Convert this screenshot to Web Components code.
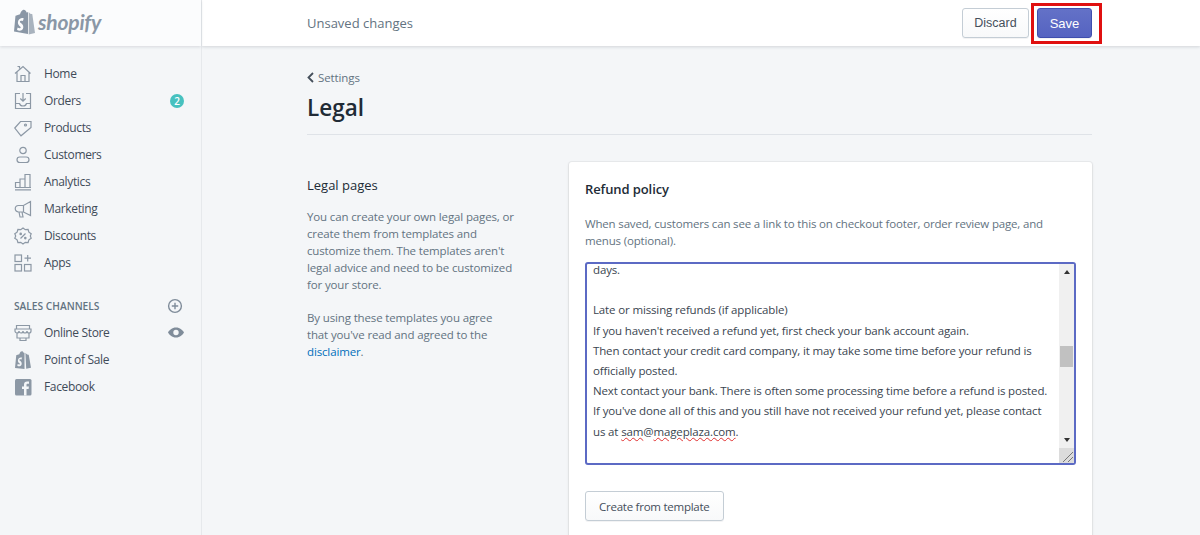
<!DOCTYPE html>
<html lang="en">
<head>
<meta charset="utf-8">
<title>Legal</title>
<style>
  html, body { margin: 0; height: 535px; overflow: hidden; background: #f4f6f8; }
  body { font-family: "Open Sans", "Noto Sans", sans-serif; color: #212b36; }
  shop-app { height: 535px; }
</style>
</head>
<body>
<template id="tpl-app">
  <style>
    :host { display: grid; grid-template-columns: 202px minmax(0, 1fr); grid-template-rows: 46px 1fr; overflow: hidden; }
    ::slotted(top-bar) { grid-column: 2; grid-row: 1; }
    ::slotted(shop-sidebar) { grid-column: 1; grid-row: 1 / 3; }
    ::slotted(main) { grid-column: 2; grid-row: 2; }
  </style>
  <slot></slot>
</template>

<template id="tpl-sidebar">
  <style>
    :host { display: block; border-right: 1px solid #e6e9ec; background: #f4f6f8; z-index: 2; }
    header { height: 46px; box-sizing: border-box; padding: 9px 0 0 14px; background: #fbfcfd; box-shadow: 0 1px 3px rgba(33,43,54,.14); display: flex; gap: 3px; align-items: flex-start; }
    header svg { width: 21px; height: 26px; flex: none; }
    .word { font: italic 700 21px/25px "Lato", "Open Sans", sans-serif; color: #8a97a6; letter-spacing: -.2px; }
    nav { padding-top: 14px; }
    h2 { margin: 16px 0 0; padding: 0 18px 0 14px; height: 27px; display: flex; align-items: center; justify-content: space-between; font-size: 10.2px; font-weight: 600; color: #637381; text-transform: uppercase; }
    h2 svg { width: 16px; height: 16px; }
  </style>
  <header>
    <svg viewBox="0 0 21 26"><path fill="#8a97a6" d="M13.6 3.2 12.6 3.5C12 1.7 11 .7 9.8 .7 8.8 .7 7.2 1.6 6 5.3L2.3 6.5C1.6 6.7 1.5 6.8 1.4 7.5L0 22.5 14 25V3.2Z"/><path fill="#a9b3be" d="M14.7 3 14.7 25.4 21 24 18.3 5.2C18.2 5 18 4.9 17.9 4.9L16.2 4.7Z"/><path fill="#fbfcfd" d="M9.7 9.4 8.9 12C8.2 11.7 7.5 11.6 6.9 11.7 5.7 11.8 5.6 13 6.5 13.7 7.8 14.7 9.6 15.800 9.300 18.500 9 20.900 7 21.900 5.100 21.700 3.900 21.600 3 21 3 21L3.600 18.500C4.300 19 5.300 19.400 6 19.300 6.800 19.200 6.900 18.400 6.400 17.800 5.300 16.600 3.700 15.700 3.900 13.200 4.100 10.800 6 9.300 7.900 9.100 8.800 9 9.300 9.200 9.700 9.400Z"/></svg>
    <span class="word">shopify</span>
  </header>
  <nav><slot></slot></nav>
  <h2><span>Sales channels</span>
    <svg viewBox="0 0 16 16" fill="none" stroke="#7f8c9a" stroke-width="1.4"><circle cx="8" cy="8" r="6.4"/><path d="M8 4.800v6.400M4.800 8h6.400"/></svg>
  </h2>
  <slot name="channels"></slot>
</template>

<template id="tpl-nav-item">
  <style>
    :host { display: flex; align-items: center; height: 27px; padding: 0 17px 0 14px; font-size: 12px; font-weight: 500; letter-spacing: -.35px; color: #3f4b58; }
    .icon { width: 18px; height: 18px; margin-right: 12px; flex: none; display: flex; }
    .label { flex: 1; }
    ::slotted(svg) { width: 18px; height: 18px; fill: none; stroke: #8c98a5; stroke-width: 1.2; }
  </style>
  <span class="icon"><slot name="icon"></slot></span>
  <span class="label"><slot></slot></span>
  <slot name="end"></slot>
</template>

<template id="tpl-badge">
  <style>
    :host { display: flex; width: 14px; height: 14px; border-radius: 50%; background: #47c1bf; color: #fff; font-size: 10px; font-weight: 600; letter-spacing: 0; align-items: center; justify-content: center; line-height: 1; }
  </style>
  <slot></slot>
</template>

<template id="tpl-topbar">
  <style>
    :host { display: flex; align-items: center; justify-content: space-between; height: 46px; box-sizing: border-box; padding: 0 98px 0 105px; background: #fff; box-shadow: 0 1px 3px rgba(33,43,54,.16); z-index: 1; }
    .title { font-size: 13px; font-weight: 500; color: #637381; }
    .actions { display: flex; align-items: center; gap: 2px; margin-top: 1px; }
    .mark { border: 3px solid #e01010; padding: 2px 7px 3px 3px; display: flex; }
    ::slotted([slot=discard]) { margin-top: -1px; }
  </style>
  <span class="title"><slot></slot></span>
  <div class="actions">
    <slot name="discard"></slot>
    <div class="mark"><slot name="save"></slot></div>
  </div>
</template>

<template id="tpl-button">
  <style>
    :host { display: inline-flex; }
    button { font: 400 11.5px "Open Sans", sans-serif; letter-spacing: -.25px; height: 30px; padding: 0 13px; color: #454f5b; background: linear-gradient(#fff, #f8f9fa); border: 1px solid #c4cdd5; border-radius: 3px; box-shadow: 0 1px 0 rgba(22,29,37,.05); }
    :host([primary]) button { font: 400 13px "Liberation Sans", sans-serif; letter-spacing: 0; color: #fff; width: 55px; padding: 0; background: linear-gradient(#6371c7, #5563c1); border-color: #3f4eae; }
    :host([sans]) button { font: 400 12.5px "Liberation Sans", sans-serif; letter-spacing: 0; width: 67px; padding: 0; }
  </style>
  <button type="button"><slot></slot></button>
</template>

<template id="tpl-page-head">
  <style>
    :host { display: block; height: 89px; box-sizing: border-box; padding-top: 22px; border-bottom: 1px solid #dfe3e8; }
    .back { display: flex; align-items: center; gap: 4px; height: 18px; font-size: 11.5px; letter-spacing: -.1px; color: #637381; }
    svg { width: 7px; height: 11px; fill: none; stroke: #454f5b; stroke-width: 1.8; }
    h1 { margin: 6px 0 0; font-size: 22.5px; line-height: 32px; font-weight: 600; color: #212b36; }
  </style>
  <div class="back"><svg viewBox="0 0 7 11"><path d="M6 1 1.500 5.500 6 10"/></svg><span><slot name="back"></slot></span></div>
  <h1><slot></slot></h1>
</template>

<template id="tpl-section">
  <style>
    :host { display: grid; grid-template-columns: 262px minmax(0, 1fr); margin-top: 27px; }
    aside { padding-top: 14px; font-size: 11.5px; letter-spacing: -.14px; line-height: 17px; color: #637381; }
    h2 { margin: 0 0 14px; font-size: 13px; letter-spacing: 0; line-height: 18px; font-weight: 500; color: #212b36; }
    ::slotted(p) { margin: 0 0 16px; width: 209px; }
  </style>
  <aside><h2><slot name="title"></slot></h2><slot name="text"></slot></aside>
  <slot></slot>
</template>

<template id="tpl-card">
  <style>
    :host { display: block; background: #fff; border-radius: 3px; padding: 17px 16px 16px; box-shadow: 0 0 0 1px rgba(63,63,68,.05), 0 1px 3px rgba(63,63,68,.15); height: 500px; }
    h3 { margin: 0; font-size: 13px; letter-spacing: -.1px; line-height: 20px; font-weight: 600; color: #212b36; }
    .help { margin: 16px 0 13px; font-size: 11.5px; letter-spacing: -.17px; line-height: 17px; color: #637381; }
    .foot { margin-top: 26px; }
  </style>
  <h3><slot name="title"></slot></h3>
  <div class="help"><slot name="help"></slot></div>
  <slot></slot>
  <div class="foot"><slot name="foot"></slot></div>
</template>

<template id="tpl-editor">
  <style>
    :host { display: flex; height: 203px; box-sizing: border-box; border: 2px solid #5c6ac4; border-radius: 3px; background: #fff; overflow: hidden; }
    .text { flex: 1; min-width: 0; margin-top: -4px; padding: 0 6px; font-size: 11.5px; letter-spacing: -.14px; line-height: 20.2px; color: #3a4550; }
    ::slotted(div) { min-height: 20.2px; white-space: nowrap; }
    .bar { width: 15px; flex: none; background: #f0f0f0; display: flex; flex-direction: column; align-items: center; }
    .arrow { height: 15px; flex: none; display: flex; align-items: center; justify-content: center; }
    .up { border: 3.500px solid transparent; border-top: 0; border-bottom: 4px solid #333; }
    .down { border: 3.500px solid transparent; border-bottom: 0; border-top: 4px solid #333; }
    .track { flex: 1; width: 100%; padding-top: 67px; box-sizing: border-box; }
    .thumb { height: 21px; margin: 0 1px; background: #c1c1c1; }
    .grip { height: 15px; flex: none; width: 100%; background: #dcdcdc; }
    .grip svg { display: block; width: 15px; height: 15px; }
  </style>
  <div class="text"><slot></slot></div>
  <div class="bar">
    <div class="arrow"><i class="up"></i></div>
    <div class="track"><div class="thumb"></div></div>
    <div class="arrow" style="height:16px"><i class="down"></i></div>
    <div class="grip"><svg viewBox="0 0 15 15" fill="none" stroke="#777"><path d="M4 14 14 4M9 14 14 9"/></svg></div>
  </div>
</template>

<shop-app>
  <shop-sidebar>
    <nav-item><svg slot="icon" viewBox="0 0 18 18"><path d="M1 8.500 9 1.500l7.500 7M3 7v9.500h12V7M3.500 1.500h2v2M7 16.500v-6h4v6"/></svg>Home</nav-item>
    <nav-item><svg slot="icon" viewBox="0 0 18 18"><path d="M6 1.500H1.500v15h15v-15H12M9 1v8M6.300 6.500 9 9.200l2.700-2.700M1.500 11.500h4c.5 2 1.600 2.500 3.500 2.500s3-.5 3.500-2.500h4"/></svg>Orders<nav-badge slot="end">2</nav-badge></nav-item>
    <nav-item><svg slot="icon" viewBox="0 0 18 18"><path d="M.8 9 6.500 2.500H17V8.500L7 16.800z"/><circle cx="11.500" cy="6" r="1"/></svg>Products</nav-item>
    <nav-item><svg slot="icon" viewBox="0 0 18 18"><circle cx="9" cy="4.500" r="3.200"/><rect x="3" y="11" width="12" height="5.500" rx="2.750"/></svg>Customers</nav-item>
    <nav-item><svg slot="icon" viewBox="0 0 18 18"><path d="M1 16.800h16M1.500 14.500v-5h4.500v5M6 14.500V6h5v8.500M11 14.500V1.500h5v13M1 14.500h16"/></svg>Analytics</nav-item>
    <nav-item><svg slot="icon" viewBox="0 0 18 18"><path d="M16.500 1.500v14L9.500 12H4.500a3.200 3.200 0 0 1 0-6.500h5zM9.500 5.500V12M5 12l1 5h3l-1-5"/></svg>Marketing</nav-item>
    <nav-item><svg slot="icon" viewBox="0 0 18 18"><path d="M9 1l2.300 1.700 2.800-.2.800 2.700 2.300 1.600L16.300 9l.9 2.200-2.300 1.600-.8 2.700-2.800-.2L9 17l-2.300-1.700-2.800.2-.8-2.700L.8 11.200 1.700 9 .8 6.800l2.300-1.600.8-2.700 2.800.2z"/><path d="M11.500 6.500l-5 5"/><circle cx="6.700" cy="6.900" r=".7"/><circle cx="11.300" cy="11.100" r=".7"/></svg>Discounts</nav-item>
    <nav-item><svg slot="icon" viewBox="0 0 18 18"><rect x="1" y="1" width="6.500" height="6.500"/><rect x="1" y="10.500" width="6.500" height="6.500"/><rect x="10.500" y="10.500" width="6.500" height="6.500"/><path d="M13.700 1v6.500M10.500 4.200H17"/></svg>Apps</nav-item>

    <nav-item slot="channels"><svg slot="icon" viewBox="0 0 18 18"><path d="M2.500 1.500h13v3.500H2.500zM1 5h16v2a2 2 0 0 1-4 0 2 2 0 0 1-4 0 2 2 0 0 1-4 0 2 2 0 0 1-4 0zM3 9v5h12V9M6 14v2.500h6V14"/></svg>Online Store<svg slot="end" style="width:16px;height:11px" viewBox="0 0 16 11"><path style="fill:#7f8c9a;stroke:none" fill-rule="evenodd" d="M8 .5C4 .5 1.200 3.200 0 5.500 1.200 7.800 4 10.500 8 10.500s6.800-2.700 8-5C14.800 3.200 12 .5 8 .5zm0 2.300a2.700 2.700 0 1 1 0 5.400 2.700 2.700 0 0 1 0-5.400z"/></svg></nav-item>
    <nav-item slot="channels"><svg slot="icon" viewBox="0 0 18 18"><path style="fill:#8c98a5;stroke:none" d="M10.500 1.800 9.800 2C9.400.8 8.700.2 7.900.2 7.200.2 6.100.8 5.300 3.300L2.800 4.100C2.300 4.200 2.300 4.300 2.200 4.800L1 17l9.500 1zM11.400 2l.8 15.800 4.800-1L14.800 4c0-.2-.2-.3-.3-.3l-1.300-.1z"/><path style="fill:#f4f6f8;stroke:none" d="M8 6.500 7.500 8.400C7 8.200 6.500 8.100 6 8.200c-.8.100-.9.900-.3 1.400.9.700 2.200 1.500 2 3.400-.2 1.700-1.600 2.400-2.900 2.300-.9-.1-1.500-.5-1.500-.5l.4-1.700c.5.300 1.200.6 1.700.5.500-.1.600-.6.300-1-.8-.9-1.900-1.500-1.800-3.200.2-1.700 1.500-2.800 2.900-2.900.6 0 1.200 0 1.500.2z"/></svg>Point of Sale</nav-item>
    <nav-item slot="channels"><svg slot="icon" viewBox="0 0 18 18"><rect style="fill:#8c98a5;stroke:none" x="1" y="1" width="16.500" height="16.500" rx="1.500"/><path style="fill:#f4f6f8;stroke:none" d="M12.500 17.500v-6.400h2.100l.3-2.500h-2.400V7c0-.7.200-1.200 1.200-1.200h1.300V3.600c-.2 0-1-.1-1.900-.1-1.900 0-3.100 1.100-3.100 3.200v1.900H8v2.500h2v6.400z"/></svg>Facebook</nav-item>
  </shop-sidebar>

  <top-bar>
    Unsaved changes
    <ui-button slot="discard" sans>Discard</ui-button>
    <ui-button slot="save" primary>Save</ui-button>
  </top-bar>

  <main style="padding:0 108px 0 105px;min-width:0">
    <page-head><span slot="back">Settings</span>Legal</page-head>
    <legal-section>
      <span slot="title">Legal pages</span>
      <p slot="text">You can create your own legal pages, or create them from templates and customize them. The templates aren't legal advice and need to be customized for your store.</p>
      <p slot="text">By using these templates you agree that you've read and agreed to the <span style="color:#006fbb">disclaimer</span>.</p>
      <form-card>
        <span slot="title">Refund policy</span>
        <span slot="help">When saved, customers can see a link to this on checkout footer, order review page, and menus (optional).</span>
        <text-editor>
          <div>days.</div>
          <div></div>
          <div>Late or missing refunds (if applicable)</div>
          <div>If you haven't received a refund yet, first check your bank account again.</div>
          <div>Then contact your credit card company, it may take some time before your refund is</div>
          <div>officially posted.</div>
          <div>Next contact your bank. There is often some processing time before a refund is posted.</div>
          <div>If you've done all of this and you still have not received your refund yet, please contact</div>
          <div>us at <u style="text-decoration:underline wavy #e03030 1px">sam</u>@<u style="text-decoration:underline wavy #e03030 1px">mageplaza.com</u>.</div>
        </text-editor>
        <ui-button slot="foot">Create from template</ui-button>
      </form-card>
    </legal-section>
  </main>
</shop-app>

<script>
  // each tag just clones its template into an open shadow root
  const tags = {
    'shop-app': 'tpl-app',
    'shop-sidebar': 'tpl-sidebar',
    'nav-item': 'tpl-nav-item',
    'nav-badge': 'tpl-badge',
    'top-bar': 'tpl-topbar',
    'ui-button': 'tpl-button',
    'page-head': 'tpl-page-head',
    'legal-section': 'tpl-section',
    'form-card': 'tpl-card',
    'text-editor': 'tpl-editor'
  };
  for (const [tag, id] of Object.entries(tags)) {
    customElements.define(tag, class extends HTMLElement {
      constructor() {
        super();
        const root = this.attachShadow({mode: 'open'});
        root.appendChild(document.getElementById(id).content.cloneNode(true));
      }
    });
  }
</script>
</body>
</html>
